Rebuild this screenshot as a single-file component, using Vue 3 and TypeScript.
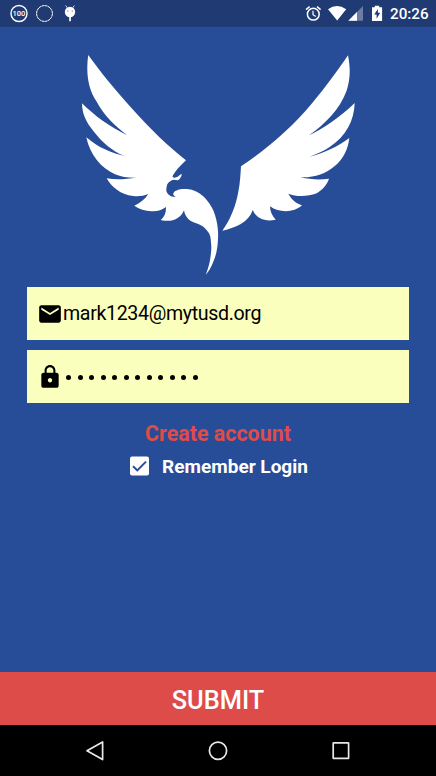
<script setup lang="ts">
import { ref } from 'vue'

const email = ref('mark1234@mytusd.org')
const passwordLength = 12
const remember = ref(true)
</script>

<template>
  <div class="screen">
    <header class="status">
      <svg class="notifications" width="90" height="27" viewBox="0 0 90 27">
        <circle cx="19" cy="13.5" r="8" fill="none" stroke="#fff" stroke-width="1.4" />
        <text x="19" y="16.3" text-anchor="middle" class="badge">100</text>
        <circle cx="44.5" cy="13.5" r="7.9" fill="none" stroke="#fff" stroke-width="1" stroke-dasharray="2.8 .3" />
        <path d="M65.7 5.5l1.5 2.3M74.3 5.5l-1.5 2.3" stroke="#fff" stroke-width=".8" />
        <circle cx="70" cy="12" r="5.2" fill="#fff" />
        <path d="M69.2 16h1.7v5.3h-1.7z" fill="#fff" />
        <circle cx="67.8" cy="11" r=".6" fill="#203a73" />
        <circle cx="72.2" cy="11" r=".6" fill="#203a73" />
      </svg>
      <div class="system">
        <svg width="84" height="27" viewBox="302 0 84 27">
          <g fill="none" stroke="#fff" stroke-width="1.5">
            <circle cx="313.3" cy="14.2" r="5.9" />
            <path d="M306 9.6l3.6-3M320.6 9.6l-3.6-3" />
            <path d="M313 10.7v4l2.8 1.7" stroke-width="1.2" />
          </g>
          <path d="M337.2 20.5L328 9.2Q337 2.8 346.2 9.2z" fill="#fff" />
          <path d="M363 6v14.7h-14.7z" fill="#6a7da5" />
          <path d="M357 12v8.7h-8.7z" fill="#fff" />
          <path d="M372 7.3h2.8V5.7h4.4v1.6h2.9v13.6H372z" fill="#fff" />
          <path d="M377.9 9l-3.7 5.5h2.4v4.3l3.6-6h-2.3z" fill="#203a73" />
        </svg>
        <span class="clock">20:26</span>
      </div>
    </header>

    <main class="content">
      <svg class="logo" width="276" height="222" viewBox="80 54 276 222" fill="#fff">
        <path
          d="M88.2 55C99 70 115 90 131.7 108.3C149 128 169 147 186 160.3C182 164 177.5 168.5 175 172.3
          C173.4 174.5 172.4 176 172.6 177.1C174 178.2 176.5 177.6 178 176.5C179.3 175.5 180.2 174.8 181.7 174.1
          C182 176 180 178.8 178.4 180C176.6 180.5 175.5 179.7 174 179.7C171 180.2 168.3 182 167.3 184.3
          C166.5 187 166 189 166.5 191.4C167.5 194.5 171.5 197.2 175.8 196.7C173.6 195.7 173.3 195 173.2 194.1
          C173.6 191 178 189 185 189C189 188.7 193.5 190 196.7 191.7C201 193.8 204 196.6 206.7 200
          C210.5 204.5 213.5 209.5 215 215C217.5 223 218.5 231 218 238.3C217.8 248 216 256 213.3 261.7
          C211 268 208 272 205.7 275C207.4 270.5 209 266 210 260C211 254 211.6 249 211.2 245
          C210.9 239 210.6 235.5 208.3 232.3C206 228.5 202.5 225.7 198.3 224C194.5 222.7 191 221.5 188.3 219
          C186 216.5 184.5 214 184 210.3C182.7 213.5 181 216 178 217.7C173 221 167 221.6 160.7 220
          C164.3 217.5 166.2 213 166 207C162 210 157 211.7 151.7 211.3C145 211 139 209 134.3 205.7
          C140 203 145 199.2 148.3 194C143 196.2 138 196.6 133.3 196C120 195 111 186 106.7 178.3
          C117 180.3 127 179 136 177.7C128 177.8 121 177 115 174.3C101 168 90 155 86.3 137.3
          C98 147.5 111 153 126.7 156.5C121 155.2 116.5 152.6 111.7 149C106 145 101 140.5 96.7 135
          C88 125 82 116 82 103.3C95 116 109 126.5 127.3 135.3C115 126 104 115.5 96.7 101.7
          C88 89 85.8 73 88.2 55z"
        />
        <path
          d="M348 55.3C338 70 325 88 313.3 101.7C290 130 264 151 241 166.3C240.5 175 240 184 238.3 191.7
          C236 206 230 220 222.3 230.7C236 227.5 249 222 252.7 210C256 218 264.5 222.2 275.7 219.7
          C272 215.5 270 211.2 270 206.3C279 213 294 213 302 205.3C296 203.5 291.5 199.5 288.3 193.7
          C296 196.7 307 197 316.7 193.3C322 190 327 185 329 178.7C319 180.2 310 179.3 300.7 177.3
          C326 178.5 347 162 349.3 138C337 147 324 153 309.7 156.7C317 153.5 324 151 330 146.7
          C346 136 354 121 354.7 103C340 117 324 128.5 309 135.3C325 124 340 109 346.5 91
          C350.5 79 350.5 68 348 55.3z"
        />
      </svg>

      <form class="form" @submit.prevent>
        <div class="field">
          <svg width="26" height="26" viewBox="0 0 24 24">
            <path d="M20 4H4c-1.1 0-1.99.9-1.99 2L2 18c0 1.1.9 2 2 2h16c1.1 0 2-.9 2-2V6c0-1.1-.9-2-2-2zm0 4l-8 5-8-5V6l8 5 8-5v2z" />
          </svg>
          <span class="email">{{ email }}</span>
        </div>
        <div class="field">
          <svg width="26" height="26" viewBox="0 0 24 24">
            <path d="M18 8h-1V6c0-2.76-2.24-5-5-5S7 3.24 7 6v2H6c-1.1 0-2 .9-2 2v10c0 1.1.9 2 2 2h12c1.1 0 2-.9 2-2V10c0-1.1-.9-2-2-2zm-6 9c-1.1 0-2-.9-2-2s.9-2 2-2 2 .9 2 2-.9 2-2 2zm3.1-9H8.9V6c0-1.71 1.39-3.1 3.1-3.1 1.71 0 3.1 1.39 3.1 3.1v2z" />
          </svg>
          <span class="dots"><i v-for="n in passwordLength" :key="n" /></span>
        </div>
      </form>

      <a class="create">Create account</a>
      <div class="remember" @click="remember = !remember">
        <svg width="20" height="20" viewBox="0 0 20 20">
          <rect x="0" y=".5" width="19" height="19" rx="2" fill="#fff" />
          <path v-if="remember" d="M3 10.2l4.3 4.2 8.7-8.8" fill="none" stroke="#284d98" stroke-width="2" />
        </svg>
        <span>Remember Login</span>
      </div>
    </main>

    <button class="submit">SUBMIT</button>

    <nav class="nav">
      <svg width="22" height="22" viewBox="0 0 22 22"><path d="M18.6 2v17.6L3 10.8z" /></svg>
      <svg width="22" height="22" viewBox="0 0 22 22"><circle cx="11" cy="10.7" r="8.6" /></svg>
      <svg width="22" height="22" viewBox="0 0 22 22"><rect x="3.2" y="2.9" width="15.4" height="15.4" rx=".4" /></svg>
    </nav>
  </div>
</template>

<style>
body {
  margin: 0;
}
</style>

<style scoped>
.screen {
  box-sizing: border-box;
  width: 436px;
  height: 776px;
  display: flex;
  flex-direction: column;
  overflow: hidden;
  background: #284d98;
  font-family: Roboto, sans-serif;
}
svg {
  display: block;
  flex: none;
}
.status {
  height: 27px;
  display: flex;
  justify-content: space-between;
  background: #203a73;
  color: #fff;
}
.badge {
  font: 500 7.5px Roboto, sans-serif;
  fill: #fff;
}
.system {
  display: flex;
  align-items: center;
  gap: 4px;
  padding-right: 8px;
}
.clock {
  width: 38px;
  padding-top: 1px;
  font-size: 15.2px;
  font-weight: 500;
  line-height: 27px;
  white-space: nowrap;
}
.content {
  flex: 1;
  display: flex;
  flex-direction: column;
  align-items: center;
  padding-top: 27px;
}
.form {
  align-self: stretch;
  display: flex;
  flex-direction: column;
  gap: 10px;
  padding: 11px 27px 0;
}
.field {
  height: 53px;
  display: flex;
  align-items: center;
  box-sizing: border-box;
  padding-left: 10px;
  background: #faffbd;
}
.email {
  padding-top: 1px;
  font-size: 19.6px;
  letter-spacing: -0.35px;
  line-height: 26px;
  color: #000;
}
.dots {
  display: flex;
  gap: 6.5px;
  padding: 2px 0 0 3px;
}
.dots i {
  width: 5px;
  height: 5px;
  border-radius: 50%;
  background: #000;
}
.create {
  margin-top: 18px;
  font-size: 21.4px;
  font-weight: 700;
  line-height: 26px;
  color: #de4c4a;
}
.remember {
  display: flex;
  align-items: center;
  gap: 12px;
  margin-top: 6px;
  padding-left: 2px;
  height: 26px;
  color: #fff;
  font-size: 19px;
  font-weight: 700;
}
.submit {
  height: 53px;
  border: 0;
  padding: 3px 0 0;
  background: #de4c4a;
  color: #fff;
  font: 500 25.4px Roboto, sans-serif;
}
.nav {
  height: 51px;
  display: flex;
  align-items: center;
  justify-content: center;
  gap: 101px;
  background: #000;
}
.nav svg {
  fill: none;
  stroke: #e8e8e8;
  stroke-width: 1.7;
  stroke-linejoin: round;
}
</style>
